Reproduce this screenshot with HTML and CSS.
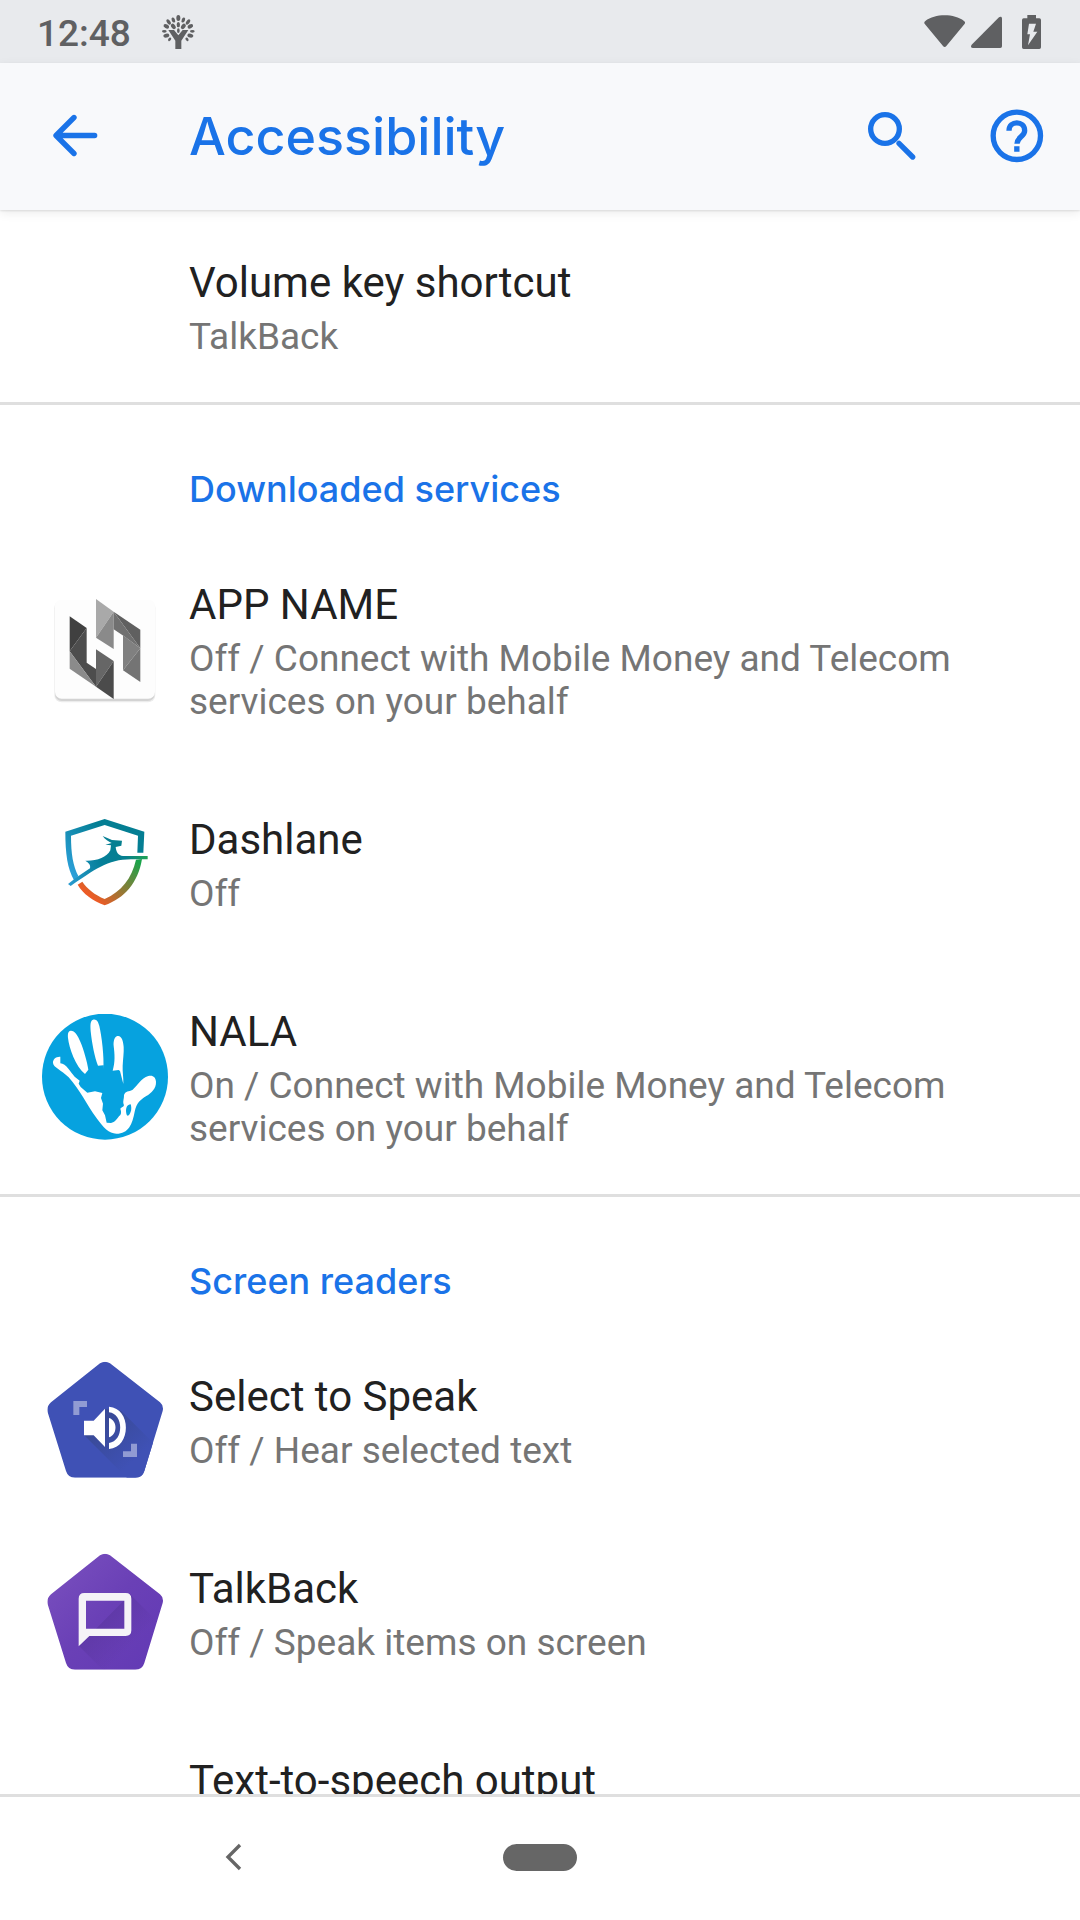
FILE: index.html
```html
<!DOCTYPE html>
<html lang="en">
<head>
<meta charset="utf-8">
<meta name="viewport" content="width=device-width, initial-scale=1">
<title>Accessibility</title>
<link rel="stylesheet" href="styles.css">
</head>
<body>
<div class="status-bar">
  <span class="clock">12:48</span>
  <svg class="tree" viewBox="465 42 105 108" aria-hidden="true">
    <path d="M487 90h17l13 16 13-16h17l-21 32v25h-18v-25z"/>
    <g>
      <ellipse cx="517" cy="54" rx="6" ry="9"/>
      <ellipse cx="517" cy="74" rx="5" ry="8"/>
      <ellipse cx="517" cy="92" rx="4" ry="7"/>
      <ellipse cx="502" cy="60" rx="5" ry="8" transform="rotate(-20 502 60)"/>
      <ellipse cx="532" cy="60" rx="5" ry="8" transform="rotate(20 532 60)"/>
      <ellipse cx="502" cy="79" rx="6" ry="9" transform="rotate(-35 502 79)"/>
      <ellipse cx="532" cy="79" rx="6" ry="9" transform="rotate(35 532 79)"/>
      <ellipse cx="488" cy="66" rx="5" ry="9" transform="rotate(-35 488 66)"/>
      <ellipse cx="546" cy="66" rx="5" ry="9" transform="rotate(35 546 66)"/>
      <ellipse cx="481" cy="79" rx="6" ry="9" transform="rotate(-60 481 79)"/>
      <ellipse cx="553" cy="79" rx="6" ry="9" transform="rotate(60 553 79)"/>
      <ellipse cx="475" cy="94" rx="7" ry="4"/>
      <ellipse cx="559" cy="94" rx="7" ry="4"/>
      <ellipse cx="481" cy="107" rx="9" ry="6" transform="rotate(-12 481 107)"/>
      <ellipse cx="553" cy="107" rx="9" ry="6" transform="rotate(12 553 107)"/>
      <ellipse cx="491" cy="118" rx="4" ry="6" transform="rotate(35 491 118)"/>
      <ellipse cx="543" cy="118" rx="4" ry="6" transform="rotate(-35 543 118)"/>
    </g>
  </svg>
  <svg class="indicators" viewBox="372 39 354 108" aria-hidden="true">
    <path d="M434 43c22 0 43 6 58 17 4 3 4 6 1 10l-54 65c-3 4-7 4-10 0l-54-65c-3-4-3-7 1-10 15-11 36-17 58-17z"/>
    <path d="M606 52v84q0 5-5 5h-82c-6 0-8-5-4-10l82-82c4-3 9-2 9 3z"/>
    <path fill-rule="evenodd" d="M682 42h26v10h10q5 0 5 5v82q0 5-5 5h-47q-5 0-5-5V57q0-5 5-5h11zM687 68l-5 32h8l-6 33 28-41h-12l8-24z"/>
  </svg>
</div>

<header class="app-bar">
  <button class="icon-button" type="button" aria-label="Navigate up">
    <svg class="arrow" viewBox="150 345 135 128" aria-hidden="true"><path d="M213 355l-54 54 54 54M162 409h113"/></svg>
  </button>
  <h1 class="page-title">Accessibility</h1>
  <button class="icon-button" type="button" aria-label="Search">
    <svg class="search" viewBox="198 332 147 147" aria-hidden="true"><circle cx="252" cy="386" r="43"/><path d="M294 429l41 41"/></svg>
  </button>
  <button class="icon-button" type="button" aria-label="Help">
    <svg class="help" viewBox="569 326 162 162" aria-hidden="true"><circle cx="649.500" cy="406.500" r="71"/><path d="M626 391c0-31 47-31 47 0 0 17-23 20-23 39M649.500 438v16"/></svg>
  </button>
</header>

<main class="settings">
  <section class="group">
    <a class="row" href="#volume-key">
      <span class="icon"></span>
      <span class="text"><span class="title">Volume key shortcut</span><span class="summary">TalkBack</span></span>
    </a>
  </section>

  <section class="group">
    <h2 class="group-title">Downloaded services</h2>
    <a class="row" href="#app-name">
      <svg class="icon" viewBox="36 20 378 378" aria-hidden="true">
        <rect x="73" y="62" width="303" height="304" rx="22" fill="#ececec"/>
        <rect x="75" y="64" width="299" height="298" rx="20" fill="#d3d3d3"/>
        <rect x="75" y="58" width="300" height="297" rx="20" fill="#fdfdfd"/>
        <path fill="#a9a9a9" d="M198 56l53 38-53 78z"/>
        <path fill="#8a8a8a" d="M251 94v112l-53-34z"/>
        <path fill="#606060" d="M251 94l80 54v56z"/>
        <path fill="#707070" d="M251 94l80 110-51-38-29-19z"/>
        <path fill="#808080" d="M279 165l52 39-52 66z"/>
        <path fill="#747474" d="M331 204v101l-52-35z"/>
        <path fill="#404040" d="M119 108l51 35-51 70z"/>
        <path fill="#4d4d4d" d="M170 143v104l28 19v53l-79-106z"/>
        <path fill="#8b8b8b" d="M119 213l79 106-79-54z"/>
        <path fill="#666" d="M198 207l53 35-53 77z"/>
        <path fill="#4b4b4b" d="M251 242v114l-53-37z"/>
      </svg>
      <span class="text"><span class="title">APP NAME</span><span class="summary">Off / Connect with Mobile Money and Telecom services on your behalf</span></span>
    </a>
    <a class="row" href="#dashlane">
      <svg class="icon" viewBox="6 0 378 378" aria-hidden="true">
        <defs>
          <linearGradient id="shield-top" gradientUnits="userSpaceOnUse" x1="85" y1="210" x2="200" y2="100"><stop offset="0" stop-color="#2b9fd8"/><stop offset="1" stop-color="#047e93"/></linearGradient>
          <linearGradient id="shield-bottom" gradientUnits="userSpaceOnUse" x1="185" y1="315" x2="295" y2="185"><stop offset="0" stop-color="#ec5b26"/><stop offset="1" stop-color="#1aa34a"/></linearGradient>
          <linearGradient id="antelope" gradientUnits="userSpaceOnUse" x1="85" y1="250" x2="322" y2="170"><stop offset="0" stop-color="#2a9bd0"/><stop offset=".45" stop-color="#057f99"/><stop offset=".75" stop-color="#067f8f"/><stop offset="1" stop-color="#20a352"/></linearGradient>
        </defs>
        <path fill="url(#shield-top)" d="M103 242C82 206 76 160 76 95l118-38 119 38-3 63h-18l2-51-100-32-101 32c0 55 6 90 22 121z"/>
        <path fill="url(#shield-bottom)" d="M113 254l14-9c15 22 37 39 67 52 51-24 81-61 94-118l18-2c-12 73-54 118-112 139-37-14-64-34-81-62z"/>
        <path fill="url(#antelope)" d="M84 252l27-21 39-26c2-10-2-15-14-23 35 1 64-9 75-31l2-15-17-2 19-5c-10-5-19-10-27-21l28 12 30 2-2 15-17 4c2 16 7 25 22 27h74v10h-50c-70 0-112 33-181 80z"/>
      </svg>
      <span class="text"><span class="title">Dashlane</span><span class="summary">Off</span></span>
    </a>
    <a class="row" href="#nala">
      <svg class="icon" viewBox="36 40 378 378" aria-hidden="true">
        <circle cx="225" cy="228" r="189" fill="#06a2df"/>
        <path fill="#fff" d="M91 168c-13-1-23 8-22 19 2 14 24 20 47 43 35 39 53 80 84 123 20 28 37 46 59 46 37 0 48-29 55-66 5-26 18-37 35-47 15-9 30-23 29-43-1-14-10-21-23-17-22 6-33 30-47 41-13 8-20 1-26 16 0 14-4 18-1 28 3 7-5 8-10 13 4 11 3 17-4 23-6 8-12 18-24 20l-13-1-5-22-8-15 2-20-6-17 4-15-22-5-23 4-20-17-6-10 3-9-15-12c-14-15-25-39-43-40z"/>
        <path fill="#fff" d="M122 90c-8 1-9 10-8 22 3 30 23 86 51 108l10-13c-3-22-14-61-24-84-8-20-18-34-29-33zM189 57c-9 3-8 18-7 35 4 37 12 78 22 103l16-1v12c3-36-5-101-12-130-3-13-9-22-19-19zM262 106c-9 2-12 16-11 30 3 24 5 47-3 74l18-2 4 3 10 39c1-18-3-37-2-54 1-22 4-40 3-57-1-19-7-36-19-33z"/>
        <path fill="#06a2df" d="M302 311c-10 1-14 9-14 20 1 10 2 18 9 12 6-7 9-20 5-32z"/>
      </svg>
      <span class="text"><span class="title">NALA</span><span class="summary">On / Connect with Mobile Money and Telecom services on your behalf</span></span>
    </a>
  </section>

  <section class="group">
    <h2 class="group-title">Screen readers</h2>
    <a class="row" href="#select-to-speak">
      <svg class="icon" viewBox="36 21 378 378" aria-hidden="true">
        <defs>
          <clipPath id="select-shape"><path d="M210 40q15-9 30 0l150 117q12 10 8 26l-55 180q-6 20-27 20H135q-21 0-27-20L53 187q-4-18 10-30z"/></clipPath>
          <linearGradient id="select-shadow" gradientUnits="userSpaceOnUse" x1="220" y1="220" x2="320" y2="325"><stop offset="0" stop-color="#394a98"/><stop offset="1" stop-color="#3f51b5"/></linearGradient>
        </defs>
        <g clip-path="url(#select-shape)">
          <path fill="#3f51b5" d="M36 21h378v378H36z"/>
          <path fill="url(#select-shadow)" d="M162 255l63-78 48 5 140 140v77H306z"/>
        </g>
        <path fill="#919bd3" d="M130 153h41v18h-23v24h-18zM321 281v40h-42v-17h24v-23z"/>
        <path fill="#fff" d="M162 212h29l34-36v115l-34-35h-29z"/>
        <path fill="#fff" d="M237 170c68 4 68 122 0 127v-18c45-5 45-87 0-92z"/>
        <path fill="#fff" d="M237 204c26 7 26 50 0 58z"/>
      </svg>
      <span class="text"><span class="title">Select to Speak</span><span class="summary">Off / Hear selected text</span></span>
    </a>
    <a class="row" href="#talkback">
      <svg class="icon" viewBox="36 27 378 378" aria-hidden="true">
        <defs>
          <linearGradient id="talkback-fill" gradientUnits="userSpaceOnUse" x1="80" y1="100" x2="350" y2="350"><stop offset="0" stop-color="#774dbd"/><stop offset=".5" stop-color="#6a40b6"/><stop offset="1" stop-color="#643bb5"/></linearGradient>
          <clipPath id="talkback-shape"><path d="M210 46q15-9 30 0l150 117q12 10 8 26l-55 180q-6 20-27 20H135q-21 0-27-20L53 193q-4-18 10-30z"/></clipPath>
          <linearGradient id="talkback-shadow" gradientUnits="userSpaceOnUse" x1="220" y1="220" x2="310" y2="310"><stop offset="0" stop-color="#5a36a0" stop-opacity=".7"/><stop offset="1" stop-color="#5a36a0" stop-opacity="0"/></linearGradient>
        </defs>
        <g clip-path="url(#talkback-shape)">
          <path fill="url(#talkback-fill)" d="M36 27h378v378H36z"/>
          <path fill="url(#talkback-shadow)" d="M147 318L300 163l114 114v128H234z"/>
        </g>
        <path fill="#f5f3f7" fill-rule="evenodd" d="M163 159h124q17 0 17 17v95q0 17-17 17H178l-32 31V176q0-17 17-17zM168 182v84h115v-84z"/>
      </svg>
      <span class="text"><span class="title">TalkBack</span><span class="summary">Off / Speak items on screen</span></span>
    </a>
    <a class="row" href="#text-to-speech">
      <span class="icon"></span>
      <span class="text"><span class="title">Text-to-speech output</span></span>
    </a>
  </section>
</main>

<nav class="nav-bar" aria-label="System navigation">
  <button class="nav-button" type="button" aria-label="Back">
    <svg class="chevron" viewBox="135 309 51 84" aria-hidden="true"><path d="M180 315l-36 36 36 36"/></svg>
  </button>
  <button class="nav-button" type="button" aria-label="Home"><span class="pill"></span></button>
  <span></span>
</nav>
</body>
</html>
```
FILE: styles.css
```css
* {
  box-sizing: border-box;
}

body {
  margin: 0;
  height: 100vh;
  display: flex;
  flex-direction: column;
  overflow: hidden;
  background: #fff;
  color: #212121;
  font-family: Roboto, "Liberation Sans", sans-serif;
}

svg {
  display: block;
}

button {
  padding: 0;
  border: 0;
  background: none;
}

.status-bar {
  flex: none;
  display: flex;
  align-items: center;
  height: 63px;
  padding: 0 38px 0 37px;
  background: #e8eaed;
}

.clock {
  margin-right: 30px;
  padding-top: 4px;
  color: #5f6062;
  font-size: 37px;
  font-weight: 500;
  line-height: 43px;
}

.tree {
  width: 35px;
  height: 36px;
  fill: #5f6062;
}

.indicators {
  width: 118px;
  height: 36px;
  margin-left: auto;
  fill: #5f6062;
}

.app-bar {
  position: relative;
  flex: none;
  display: flex;
  align-items: center;
  height: 147px;
  padding: 0 0 2px 12px;
  background: #f8f9fb;
  box-shadow: 0 1px 2px #0000001a, 0 3px 10px #00000014;
}

.icon-button {
  display: flex;
  align-items: center;
  justify-content: center;
  width: 126px;
  height: 126px;
}

.icon-button svg {
  fill: none;
  stroke: #1a73e8;
  stroke-width: 16;
}

.arrow {
  width: 45px;
  height: 43px;
  stroke-linecap: round;
  stroke-linejoin: round;
}

.search {
  width: 49px;
  height: 49px;
  stroke-linecap: round;
}

.help {
  width: 54px;
  height: 54px;
}

.page-title {
  flex: 1;
  margin: 0;
  padding: 2px 0 0 51px;
  color: #1a73e8;
  font-family: Inter, sans-serif;
  font-size: 52px;
  font-weight: 500;
  line-height: 64px;
}

.settings {
  flex: 1;
  min-height: 0;
  overflow: hidden;
}

.group + .group {
  border-top: 3px solid #dfdfdf;
}

.group-title {
  margin: 0;
  padding: 62px 42px 21px 189px;
  color: #1a73e8;
  font-family: Inter, sans-serif;
  font-size: 36px;
  font-weight: 500;
  line-height: 44px;
}

.row {
  display: flex;
  align-items: center;
  gap: 21px;
  padding: 0 42px;
  color: inherit;
  text-decoration: none;
}

.icon {
  flex: none;
  width: 126px;
  height: 126px;
}

.text {
  display: flex;
  flex-direction: column;
  gap: 4px;
  padding: 45px 0 44px;
}

.title {
  font-size: 42px;
  line-height: 56px;
}

.summary {
  color: #757575;
  font-size: 37px;
  line-height: 43px;
}

.nav-bar {
  flex: none;
  display: grid;
  grid-template-columns: 1fr 1fr 1fr;
  height: 126px;
  padding: 0 80px 3px;
  border-top: 3px solid #dfdfdf;
}

.nav-button {
  display: flex;
  align-items: center;
  justify-content: center;
}

.chevron {
  width: 17px;
  height: 28px;
  fill: none;
  stroke: #666;
  stroke-width: 10;
}

.pill {
  width: 74px;
  height: 27px;
  border-radius: 14px;
  background: #666;
}
```
